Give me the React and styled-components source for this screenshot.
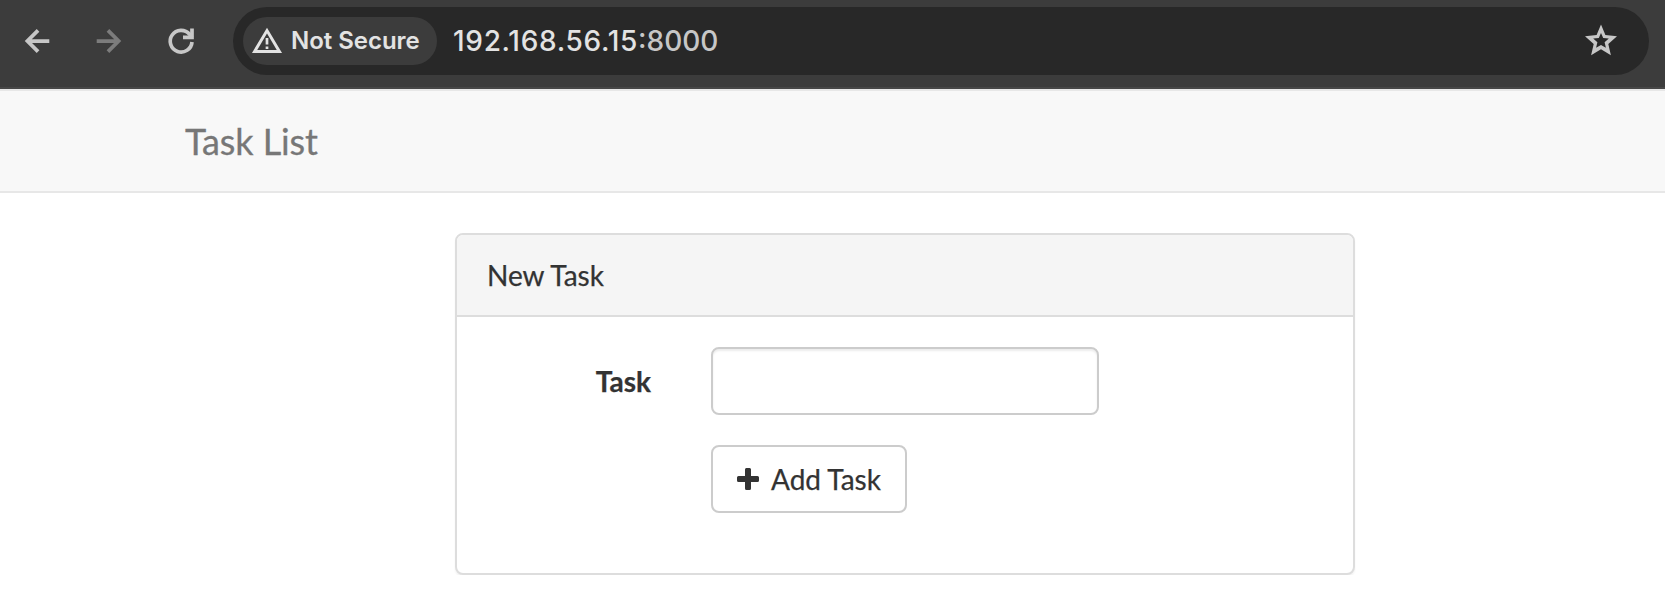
import React from "react";
import styled, { createGlobalStyle } from "styled-components";

const GlobalStyle = createGlobalStyle`
  *, *::before, *::after { box-sizing: border-box; }
  body {
    margin: 0;
    overflow: hidden;
    background: #fff;
    color: #333;
    font: 28px/40px Lato, "Liberation Sans", sans-serif;
  }
`;

const Toolbar = styled.header`
  display: flex;
  align-items: flex-start;
  height: 89px;
  padding: 7px 16px 0 19px;
  background: #3c3c3c;
  border-bottom: 2px solid #474747;
  font-family: Inter, "Liberation Sans", sans-serif;
`;

const NavButtons = styled.nav`
  display: flex;
  align-items: center;
  gap: 36px;
  width: 214px;
  height: 68px;
`;

const IconButton = styled.button`
  display: flex;
  padding: 0;
  border: 0;
  background: none;
  color: ${(p) => (p.$dim ? "#7c7c7c" : "#c7c7c7")};
`;

const AddressBar = styled.div`
  display: flex;
  flex: 1;
  align-items: center;
  height: 68px;
  padding: 0 29px 0 10px;
  border-radius: 34px;
  background: #282828;
`;

const SecurityChip = styled.div`
  display: flex;
  align-items: center;
  gap: 8px;
  width: 194px;
  height: 48px;
  padding-left: 8px;
  border-radius: 24px;
  background: #3c3c3c;
  color: #e3e3e3;
  font-size: 24px;
  font-weight: 600;
  letter-spacing: -0.03px;
  white-space: nowrap;
`;

const Url = styled.div`
  flex: 1;
  margin-left: 16px;
  color: #e3e3e3;
  font-size: 28px;
  font-weight: 450;
  letter-spacing: 0.7px;
`;

const Port = styled.span`
  color: #c7c7c7;
  letter-spacing: 0;
`;

const Navbar = styled.div`
  height: 104px;
  padding: 30px 185px;
  border: solid #e7e7e7;
  border-width: 2px 0;
  background: #f8f8f8;
`;

const Brand = styled.a`
  display: block;
  color: #777;
  font-size: 36px;
  line-height: 40px;
  letter-spacing: -0.1px;
  -webkit-text-stroke: 0.3px currentColor;
`;

const Panel = styled.main`
  width: 900px;
  margin: 40px 0 0 455px;
  border: 2px solid #ddd;
  border-radius: 8px;
  background: #fff;
  box-shadow: 0 2px 2px rgba(0, 0, 0, 0.05);
  -webkit-text-stroke: 0.25px currentColor;
`;

const PanelHeading = styled.div`
  padding: 20px 30px;
  border-bottom: 2px solid #ddd;
  border-radius: 6px 6px 0 0;
  background: #f5f5f5;
`;

const PanelBody = styled.form`
  padding: 30px 0;
`;

const FormGroup = styled.div`
  display: grid;
  grid-template-columns: 224px 448px;
  margin-bottom: 30px;
`;

const Label = styled.label`
  padding: 14px 30px 0;
  font-weight: 700;
  text-align: right;
`;

const Field = styled.div`
  display: flex;
  grid-column: 2;
  padding: 0 30px;
`;

const TextInput = styled.input`
  width: 100%;
  height: 68px;
  padding: 12px 24px;
  border: 2px solid #ccc;
  border-radius: 8px;
  outline: 0;
  background: #fff;
  box-shadow: inset 0 2px 2px rgba(0, 0, 0, 0.075);
  font: inherit;
`;

const AddButton = styled.button`
  display: flex;
  align-items: center;
  gap: 12px;
  width: 196px;
  height: 68px;
  padding: 0 24px;
  border: 2px solid #ccc;
  border-radius: 8px;
  background: #fff;
  color: #333;
  font: inherit;
  white-space: nowrap;
`;

const BackIcon = () => (
  <svg width="36" height="36" viewBox="0 0 24 24" fill="none" stroke="currentColor" strokeWidth="2.5">
    <path d="M12.7 4.9L5.6 12L12.7 19.1M5.6 12H20.2" />
  </svg>
);

const ForwardIcon = () => (
  <svg width="36" height="36" viewBox="0 0 24 24" fill="none" stroke="currentColor" strokeWidth="2.5">
    <path d="M11.3 4.9L18.4 12L11.3 19.1M18.4 12H3.8" />
  </svg>
);

const ReloadIcon = () => (
  <svg width="36" height="36" viewBox="0 0 36 36" fill="none" stroke="currentColor" strokeWidth="3.7">
    <path d="M29 19A10.9 10.9 0 1 1 26.5 11.2L29 14.5" />
    <path d="M29 5.5V14.4H20" />
  </svg>
);

const WarningIcon = () => (
  <svg width="32" height="32" viewBox="0 0 32 32" fill="none" stroke="currentColor">
    <path d="M3.6 26.5L16 5.6L28.4 26.5Z" strokeWidth="3" />
    <path d="M16 13V19.6M16 21.4V24" strokeWidth="2.7" />
  </svg>
);

const StarIcon = () => (
  <svg width="38" height="38" viewBox="0 0 38 38" fill="currentColor">
    <path
      fillRule="evenodd"
      d="M19 2.5L23.4 13.1L35 14.2L26.3 21.9L28.9 33.2L19 27.3L9.1 33.2L11.7 21.9L3 14.2L14.6 13.1ZM19 10.9L16.8 16L11.2 16.5L15.4 20.2L14.1 25.8L19 22.9L23.9 25.8L22.6 20.2L26.8 16.5L21.2 16Z"
    />
  </svg>
);

const PlusIcon = () => (
  <svg width="22" height="22" viewBox="0 0 22 22" fill="currentColor">
    <path d="M9.3 0h3.4Q14 0 14 1.5V8h6.5Q22 8 22 9.5v3Q22 14 20.5 14H14v6.5Q14 22 12.5 22h-3Q8 22 8 20.5V14H1.5Q0 14 0 12.5v-3Q0 8 1.5 8H8V1.5Q8 0 9.3 0z" />
  </svg>
);

export default function App() {
  return (
    <>
      <GlobalStyle />
      <Toolbar>
        <NavButtons>
          <IconButton aria-label="Back"><BackIcon /></IconButton>
          <IconButton aria-label="Forward" $dim><ForwardIcon /></IconButton>
          <IconButton aria-label="Reload"><ReloadIcon /></IconButton>
        </NavButtons>
        <AddressBar>
          <SecurityChip><WarningIcon />Not Secure</SecurityChip>
          <Url>192.168.56.15<Port>:8000</Port></Url>
          <IconButton aria-label="Bookmark"><StarIcon /></IconButton>
        </AddressBar>
      </Toolbar>
      <Navbar><Brand>Task List</Brand></Navbar>
      <Panel>
        <PanelHeading>New Task</PanelHeading>
        <PanelBody>
          <FormGroup>
            <Label htmlFor="task">Task</Label>
            <Field><TextInput id="task" type="text" /></Field>
          </FormGroup>
          <FormGroup>
            <Field><AddButton type="button"><PlusIcon />Add Task</AddButton></Field>
          </FormGroup>
        </PanelBody>
      </Panel>
    </>
  );
}
